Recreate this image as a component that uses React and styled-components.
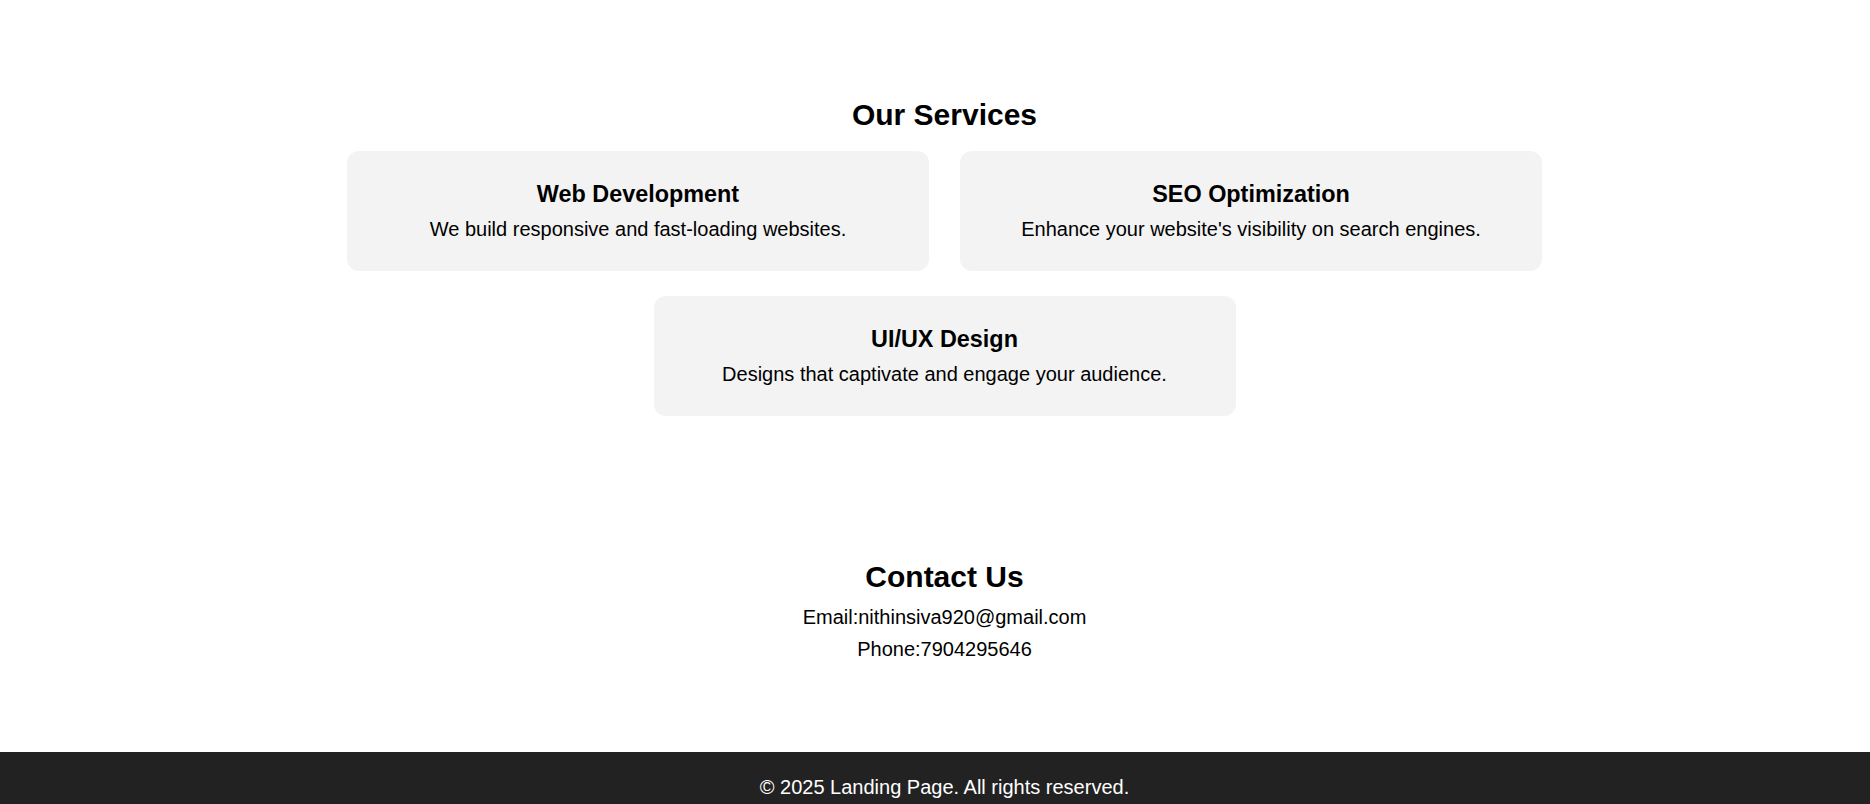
import React from "react";
import styled, { createGlobalStyle } from "styled-components";

const GlobalStyle = createGlobalStyle`
  html, body {
    margin: 0;
    padding: 0;
    background: #ffffff;
    font-family: "Liberation Sans", Arial, sans-serif;
    color: #000000;
  }
  * { box-sizing: border-box; }
`;

const Page = styled.div`
  display: flex;
  flex-direction: column;
  min-height: 100vh;
`;

const Section = styled.section`
  display: flex;
  flex-direction: column;
  align-items: center;
  padding-left: 19px;
  padding-top: ${(p) => p.$top}px;
  padding-bottom: ${(p) => p.$bottom}px;
`;

const SectionTitle = styled.h2`
  margin: 0 0 ${(p) => p.$gap}px;
  font-size: 30px;
  line-height: 34px;
  font-weight: 700;
  text-align: center;
`;

const CardGrid = styled.div`
  display: flex;
  flex-wrap: wrap;
  justify-content: center;
  gap: 25px 31px;
  width: 1195px;
`;

const Card = styled.div`
  width: 582px;
  padding: 30px 20px;
  background: #f3f3f3;
  border-radius: 12px;
  text-align: center;
`;

const CardTitle = styled.h3`
  margin: 0;
  font-size: 23.4px;
  line-height: 27px;
  font-weight: 700;
`;

const CardText = styled.p`
  margin: 10px 0 0;
  font-size: 20px;
  line-height: 23px;
`;

const ContactLine = styled.p`
  margin: ${(p) => (p.$first ? 0 : 9)}px 0 0;
  font-size: 20px;
  line-height: 23px;
  text-align: center;
`;

const Footer = styled.footer`
  background: #222222;
  color: #ffffff;
  padding: 24px 0 24px 19px;
  text-align: center;
`;

const FooterText = styled.p`
  margin: 0;
  font-size: 20px;
  line-height: 23px;
`;

const services = [
  { title: "Web Development", text: "We build responsive and fast-loading websites." },
  { title: "SEO Optimization", text: "Enhance your website's visibility on search engines." },
  { title: "UI/UX Design", text: "Designs that captivate and engage your audience." },
];

export default function App() {
  return (
    <>
      <GlobalStyle />
      <Page>
        <Section $top={98} $bottom={144}>
          <SectionTitle $gap={19}>Our Services</SectionTitle>
          <CardGrid>
            {services.map((s) => (
              <Card key={s.title}>
                <CardTitle>{s.title}</CardTitle>
                <CardText>{s.text}</CardText>
              </Card>
            ))}
          </CardGrid>
        </Section>
        <Section $top={0} $bottom={91}>
          <SectionTitle $gap={12}>Contact Us</SectionTitle>
          <ContactLine $first>Email:nithinsiva920@gmail.com</ContactLine>
          <ContactLine>Phone:7904295646</ContactLine>
        </Section>
        <Footer>
          <FooterText>© 2025 Landing Page. All rights reserved.</FooterText>
        </Footer>
      </Page>
    </>
  );
}
